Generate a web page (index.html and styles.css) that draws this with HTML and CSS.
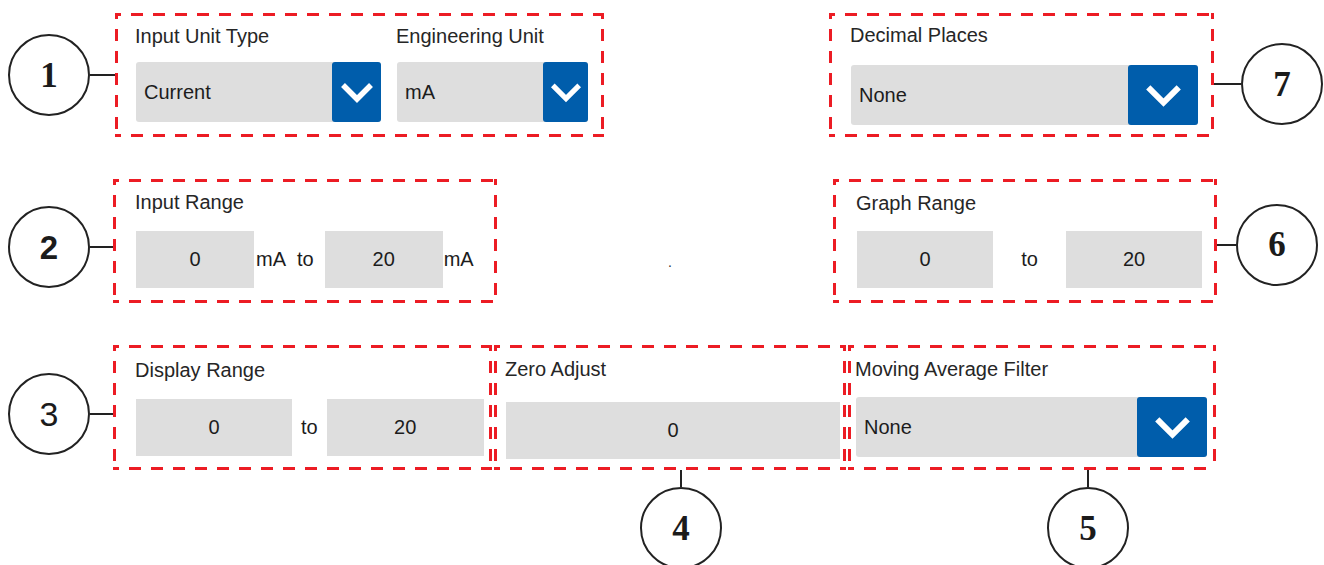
FILE: index.html
```html
<!DOCTYPE html>
<html lang="en">
<head>
    <meta charset="UTF-8">
    <meta name="viewport" content="width=device-width, initial-scale=1.0">
    <title>Analog Input Settings</title>
    <link rel="stylesheet" href="styles.css">
</head>
<body>
    <div class="sheet">
        <!-- row 1: unit type / decimal places -->
        <div class="row row-top">
            <div class="callout callout-left c1">
                <span class="num serif">1</span>
                <span class="lead"></span>
            </div>
            <div class="group group-unit">
                <div class="field field-type">
                    <div class="label">Input Unit Type</div>
                    <div class="select">
                        <span class="value">Current</span>
                        <span class="caret caret-49">
                            <svg viewBox="0 0 34 22"><polyline points="3,4 17,18 31,4"/></svg>
                        </span>
                    </div>
                </div>
                <div class="field field-eng">
                    <div class="label">Engineering Unit</div>
                    <div class="select">
                        <span class="value">mA</span>
                        <span class="caret caret-45">
                            <svg viewBox="0 0 34 22"><polyline points="3,4 17,18 31,4"/></svg>
                        </span>
                    </div>
                </div>
            </div>
            <div class="group group-decimal">
                <div class="label">Decimal Places</div>
                <div class="select">
                    <span class="value">None</span>
                    <span class="caret caret-70">
                        <svg viewBox="0 0 34 22"><polyline points="3,4 17,18 31,4"/></svg>
                    </span>
                </div>
            </div>
            <div class="callout callout-right c7">
                <span class="lead"></span>
                <span class="num serif">7</span>
            </div>
        </div>

        <!-- row 2: input range / graph range -->
        <div class="row row-mid">
            <div class="callout callout-left c2">
                <span class="num sans-bold">2</span>
                <span class="lead"></span>
            </div>
            <div class="group group-input">
                <div class="label">Input Range</div>
                <div class="range">
                    <div class="num-box w118">0</div>
                    <span class="unit">mA</span>
                    <span class="to to-input">to</span>
                    <div class="num-box w118 next-input">20</div>
                    <span class="unit unit-end">mA</span>
                </div>
            </div>
            <div class="spacer"><span class="dot">.</span></div>
            <div class="group group-graph">
                <div class="label">Graph Range</div>
                <div class="range">
                    <div class="num-box w136">0</div>
                    <span class="to to-graph">to</span>
                    <div class="num-box w136">20</div>
                </div>
            </div>
            <div class="callout callout-right c6">
                <span class="lead"></span>
                <span class="num serif">6</span>
            </div>
        </div>

        <!-- row 3: display range / zero adjust / filter -->
        <div class="row row-low">
            <div class="callout callout-left c3">
                <span class="num sans">3</span>
                <span class="lead"></span>
            </div>
            <div class="group group-display">
                <div class="label">Display Range</div>
                <div class="range">
                    <div class="num-box w156">0</div>
                    <span class="to to-display">to</span>
                    <div class="num-box w157">20</div>
                </div>
            </div>
            <div class="group group-zero">
                <div class="label">Zero Adjust</div>
                <div class="num-box w334">0</div>
            </div>
            <div class="group group-filter">
                <div class="label">Moving Average Filter</div>
                <div class="select">
                    <span class="value">None</span>
                    <span class="caret caret-70">
                        <svg viewBox="0 0 34 22"><polyline points="3,4 17,18 31,4"/></svg>
                    </span>
                </div>
            </div>
        </div>

        <!-- callouts under row 3 -->
        <div class="row row-below">
            <div class="callout callout-down c4">
                <span class="lead"></span>
                <span class="num serif">4</span>
            </div>
            <div class="callout callout-down c5">
                <span class="lead"></span>
                <span class="num serif">5</span>
            </div>
        </div>
    </div>
</body>
</html>
```

FILE: styles.css
```css
html, body {
    height: 100%;
    overflow: hidden;
}
body {
    margin: 0;
    background-color: #fff;
    font-family: "Liberation Sans", Arial, sans-serif;
    font-size: 20px;
    color: #1c1c1c;
}
.sheet {
    padding: 13px 0 0 8px;
}
.row {
    display: flex;
    align-items: center;
}
.row-mid,
.row-low {
    margin-top: 42px;
}

/* numbered callouts */
.callout {
    display: flex;
    align-items: center;
    flex-shrink: 0;
}
.callout-down {
    flex-direction: column;
}
.num {
    box-sizing: border-box;
    width: 82px;
    height: 82px;
    border: 2px solid #222;
    border-radius: 50%;
    display: flex;
    align-items: center;
    justify-content: center;
    line-height: 1;
    color: #1b1b1b;
}
.num.serif {
    font-family: "Liberation Serif", "Times New Roman", serif;
    font-weight: bold;
    font-size: 35px;
}
.num.sans-bold {
    font-family: "Liberation Sans", Arial, sans-serif;
    font-weight: bold;
    font-size: 33px;
}
.num.sans {
    font-family: "Liberation Sans", Arial, sans-serif;
    font-size: 34px;
}
.lead {
    display: block;
    height: 2px;
    background-color: #222;
}
.callout-down .lead {
    width: 2px;
    height: 17px;
}
.c1 .lead { width: 25px; }
.c2 .lead,
.c3 .lead { width: 23px; }
.c2 { margin-top: 12px; }
.c3 { margin-top: 13px; }
.c7 { margin-top: 18px; }
.c7 .lead { width: 27px; }
.c6 { margin-top: 7px; }
.c6 .lead { width: 19px; }
.c4 { margin-left: 632px; }
.c5 { margin-left: 325px; }

/* dashed group frames */
.group {
    box-sizing: border-box;
    flex-shrink: 0;
    height: 124px;
    background:
        repeating-linear-gradient(90deg, #ec1c24 0 6px, transparent 6px 16px, #ec1c24 16px 22px) left top / 100% 3px no-repeat,
        repeating-linear-gradient(90deg, #ec1c24 0 6px, transparent 6px 16px, #ec1c24 16px 22px) left bottom / 100% 3px no-repeat,
        repeating-linear-gradient(180deg, #ec1c24 0 6px, transparent 6px 16px, #ec1c24 16px 22px) left top / 3px 100% no-repeat,
        repeating-linear-gradient(180deg, #ec1c24 0 6px, transparent 6px 16px, #ec1c24 16px 22px) right top / 3px 100% no-repeat;
}
.label {
    line-height: 22px;
    margin-left: -1px;
    color: #262626;
    white-space: nowrap;
}

/* row 1 */
.group-unit {
    width: 489px;
    padding: 12px 16px 0 21px;
    display: flex;
    gap: 16px;
}
.group-unit .label {
    margin-bottom: 15px;
}
.field-type { width: 245px; }
.field-eng { width: 191px; }
.group-decimal {
    width: 385px;
    margin-left: 225px;
    padding: 11px 16px 0 22px;
}
.group-decimal .label {
    margin-bottom: 19px;
}

/* dropdowns */
.select {
    display: flex;
    height: 60px;
    background-color: #dedede;
    border-radius: 3px;
}
.select .value {
    flex: 1;
    display: flex;
    align-items: center;
    padding-left: 8px;
}
.caret {
    display: flex;
    align-items: center;
    justify-content: center;
    background-color: #005dab;
    border-radius: 3px;
}
.caret svg {
    width: 34px;
    height: 22px;
    fill: none;
    stroke: #fff;
    stroke-width: 5.5;
    stroke-linejoin: miter;
}
.caret-49 { width: 49px; }
.caret-45 { width: 45px; }
.caret-45 svg { width: 32px; }
.caret-70 { width: 70px; }
.caret-70 svg {
    width: 37px;
    height: 24px;
}

/* number boxes */
.range {
    display: flex;
    align-items: center;
}
.num-box {
    height: 57px;
    display: flex;
    align-items: center;
    justify-content: center;
    background-color: #dedede;
    flex-shrink: 0;
}
.w118 { width: 118px; }
.w136 { width: 136px; }
.w156 { width: 156px; }
.w157 { width: 157px; }
.w334 { width: 334px; }
.unit { margin-left: 2px; }
.unit-end { margin-left: 1px; }
.to-input { margin-left: 11px; }
.next-input { margin-left: 11px; }
.to-graph {
    flex: 1;
    text-align: center;
}
.to-display { margin: 0 9px 0 9px; }

/* row 2 */
.group-input {
    width: 384px;
    padding: 12px 0 0 23px;
}
.group-input .label,
.group-display .label {
    margin-bottom: 18px;
}
.spacer {
    width: 336px;
    display: flex;
    justify-content: center;
}
.dot {
    font-size: 14px;
    line-height: 14px;
    margin: 42px 0 0 10px;
    color: #333;
}
.group-graph {
    width: 384px;
    padding: 13px 15px 0 24px;
}
.group-graph .label {
    margin-bottom: 17px;
}

/* row 3 */
.row-low .group {
    height: 125px;
}
.group-display {
    width: 379px;
    padding: 14px 0 0 23px;
}
.group-zero {
    width: 352px;
    margin-left: 2px;
    padding: 13px 6px 0 12px;
}
.group-zero .label {
    margin-bottom: 22px;
}
.group-filter {
    width: 368px;
    margin-left: 2px;
    padding: 13px 9px 0 8px;
}
.group-filter .label {
    margin-bottom: 17px;
}
```
